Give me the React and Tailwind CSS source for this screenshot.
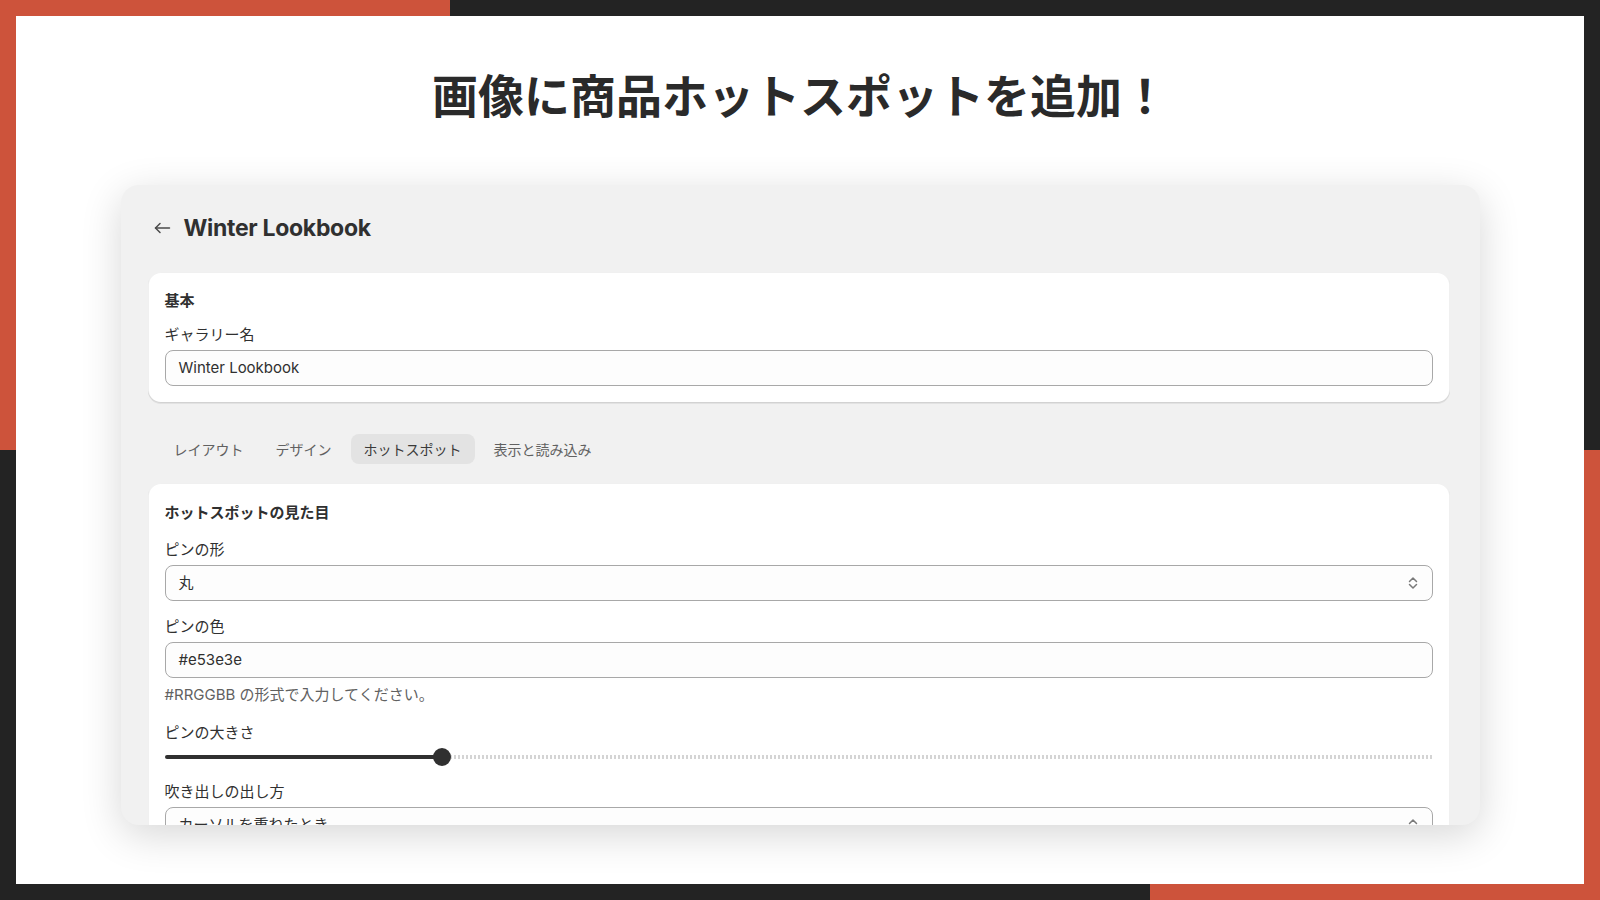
import { useState } from "react";

const RED = "bg-[#cd533b]";
const DARK = "bg-[#232323]";

function BackArrow() {
  return (
    <svg viewBox="0 0 20 20" className="w-5 h-5" fill="none" stroke="#4a4a4a" strokeWidth="1.5" strokeLinecap="round" strokeLinejoin="round">
      <path d="M3.5 10h14" />
      <path d="M8 5.5 3.5 10 8 14.5" />
    </svg>
  );
}

function SelectIcon() {
  return (
    <svg viewBox="0 0 20 20" className="w-5 h-5" fill="none" stroke="#7a7a7a" strokeWidth="1.5" strokeLinecap="round" strokeLinejoin="round">
      <path d="M6.5 8.5 10 5l3.5 3.5" />
      <path d="M6.5 11.5 10 15l3.5-3.5" />
    </svg>
  );
}

function Label({ children, className = "" }) {
  return <div className={`text-[15px] leading-[22px] text-[#303030] ${className}`}>{children}</div>;
}

function TextField({ value }) {
  return (
    <div className="mt-1 h-9 rounded-lg border border-[#a8a8a8] bg-[#fdfdfd] px-[13px] flex items-center text-[15px] text-[#303030]">
      {value}
    </div>
  );
}

function SelectField({ value }) {
  return (
    <div className="mt-1 h-9 rounded-lg border border-[#a8a8a8] bg-[#fdfdfd] pl-[13px] pr-[9px] flex items-center justify-between text-[15px] text-[#303030] shrink-0">
      <span>{value}</span>
      <SelectIcon />
    </div>
  );
}

function Card({ children, className = "" }) {
  return (
    <div
      className={`rounded-[13px] bg-white px-[17px] shadow-[0_1px_0_0_rgba(26,26,26,0.07),inset_0_-1px_0_0_rgba(0,0,0,0.12),inset_0_0_0_1px_rgba(0,0,0,0.06)] ${className}`}
    >
      {children}
    </div>
  );
}

const tabs = ["レイアウト", "デザイン", "ホットスポット", "表示と読み込み"];

export default function App() {
  const [activeTab, setActiveTab] = useState("ホットスポット");

  return (
    <div className="w-[1600px] h-[900px] flex flex-col overflow-hidden font-['Inter','Noto_Sans_CJK_JP',sans-serif]">
      {/* top band */}
      <div className="h-4 flex shrink-0">
        <div className={`w-[450px] ${RED}`} />
        <div className={`flex-1 ${DARK}`} />
      </div>

      <div className="flex-1 flex min-h-0">
        {/* left band */}
        <div className="w-4 flex flex-col shrink-0">
          <div className={`h-[434px] ${RED}`} />
          <div className={`flex-1 ${DARK}`} />
        </div>

        <main className="flex-1 bg-white flex flex-col items-center pt-[54px] min-w-0">
          <h1 className="font-['Noto_Sans_CJK_JP',sans-serif] font-bold text-[46px] leading-none text-[#2a2a2a]">
            画像に商品ホットスポットを追加！
          </h1>

          {/* app window */}
          <div className="mt-[69px] w-[1359px] h-[640px] shrink-0 rounded-[18px] bg-[#f1f1f1] overflow-hidden pt-[29px] pl-[27px] pr-[30px] shadow-[0_10px_40px_rgba(0,0,0,0.16)]">
            {/* header */}
            <div className="h-7 flex items-center">
              <div className="w-7 h-7 flex items-center justify-center">
                <BackArrow />
              </div>
              <div className="ml-[8px] text-[23px] font-bold text-[#303030] tracking-[-0.3px]">Winter Lookbook</div>
            </div>

            {/* basic */}
            <Card className="mt-[30px] pt-[18px] pb-[17px]">
              <div className="text-[15px] leading-[22px] font-bold text-[#303030]">基本</div>
              <Label className="mt-[12px]">ギャラリー名</Label>
              <TextField value="Winter Lookbook" />
            </Card>

            {/* tabs */}
            <div className="mt-[31px] ml-[13px] flex gap-[6px]">
              {tabs.map((t) => (
                <button
                  key={t}
                  onClick={() => setActiveTab(t)}
                  className={`h-[30px] px-[13px] rounded-lg text-[14px] ${
                    activeTab === t ? "bg-[#e3e3e3] text-[#3a3a3a]" : "text-[#616161]"
                  }`}
                >
                  {t}
                </button>
              ))}
            </div>

            {/* hotspot appearance */}
            <Card className="mt-[19px] pt-[19px] pb-4">
              <div className="text-[15px] leading-[22px] font-bold text-[#303030]">ホットスポットの見た目</div>

              <Label className="mt-[15px]">ピンの形</Label>
              <SelectField value="丸" />

              <Label className="mt-[15px]">ピンの色</Label>
              <TextField value="#e53e3e" />
              <div className="mt-[6px] text-[15px] leading-[22px] text-[#616161]">#RRGGBB の形式で入力してください。</div>

              <Label className="mt-4">ピンの大きさ</Label>
              <div className="mt-1 h-[18px] relative flex items-center">
                <div className="w-[21.85%] h-1 rounded-full bg-[#303030]" />
                <div className="flex-1 h-1 bg-[repeating-linear-gradient(90deg,#d4d4d4_0_2px,transparent_2px_4px)]" />
                <div className="absolute left-[21.85%] top-1/2 -translate-x-1/2 -translate-y-1/2 w-[18px] h-[18px] rounded-full bg-[#303030]" />
              </div>

              <Label className="mt-[15px]">吹き出しの出し方</Label>
              <SelectField value="カーソルを重ねたとき" />
            </Card>
          </div>
        </main>

        {/* right band */}
        <div className="w-4 flex flex-col shrink-0">
          <div className={`h-[434px] ${DARK}`} />
          <div className={`flex-1 ${RED}`} />
        </div>
      </div>

      {/* bottom band */}
      <div className="h-4 flex shrink-0">
        <div className={`w-[1150px] ${DARK}`} />
        <div className={`flex-1 ${RED}`} />
      </div>
    </div>
  );
}
